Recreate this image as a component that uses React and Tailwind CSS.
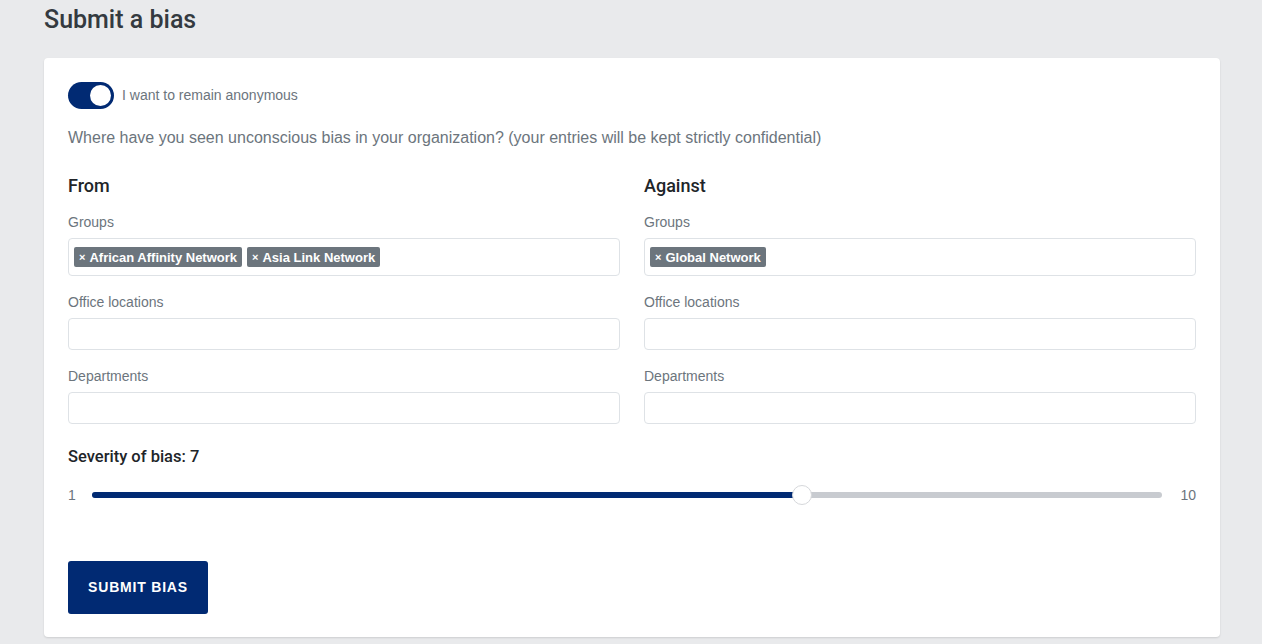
import React from "react";

const font = { fontFamily: '"Liberation Sans", Arial, sans-serif' };
const medium = { fontFamily: 'Roboto, "Liberation Sans", Arial, sans-serif' };

function Tag({ children }) {
  return (
    <span className="inline-flex items-center h-[20px] px-[5px] mr-[5px] rounded-[2px] bg-[#6c757d] text-white text-[13px] font-bold leading-none">
      <span className="text-[11px] font-bold mr-[4px]">×</span>
      {children}
    </span>
  );
}

function Column({ title, tags }) {
  return (
    <div className="flex-1 flex flex-col">
      <div className="text-[18px] leading-[22px] font-medium text-[#212529]" style={medium}>{title}</div>
      <div className="mt-[16px] text-[14px] leading-[18px] text-[#6c757d]">Groups</div>
      <div className="mt-[7px] h-[38px] border border-[#dee2e6] rounded-[4px] flex items-center pl-[5px]">
        {tags.map((t) => (
          <Tag key={t}>{t}</Tag>
        ))}
      </div>
      <div className="mt-[17px] text-[14px] leading-[18px] text-[#6c757d]">Office locations</div>
      <div className="mt-[7px] h-[32px] border border-[#dee2e6] rounded-[4px]" />
      <div className="mt-[17px] text-[14px] leading-[18px] text-[#6c757d]">Departments</div>
      <div className="mt-[7px] h-[32px] border border-[#dee2e6] rounded-[4px]" />
    </div>
  );
}

export default function App() {
  return (
    <div className="min-h-[644px] bg-[#e9eaec] px-[44px] pb-[6px]" style={font}>
      <div className="pt-[6px] text-[25px] leading-[28px] font-medium text-[#343a40]" style={medium}>Submit a bias</div>
      <div className="mt-[24px] w-[1176px] bg-white rounded-[4px] shadow-[0_1px_2px_rgba(0,0,0,0.12)] px-[24px] pt-[24px] pb-[23px]">
        <div className="flex items-center h-[27px]">
          <div className="w-[46px] h-[27px] rounded-full bg-[#012a73] flex items-center justify-end pr-[3px]">
            <div className="w-[21px] h-[21px] rounded-full bg-white" />
          </div>
          <span className="ml-[8px] text-[14px] text-[#6c757d]">I want to remain anonymous</span>
        </div>
        <div className="mt-[19px] text-[16px] leading-[20px] text-[#6c757d]">
          Where have you seen unconscious bias in your organization? (your entries will be kept strictly confidential)
        </div>
        <div className="mt-[27px] flex gap-[24px]">
          <Column title="From" tags={["African Affinity Network", "Asia Link Network"]} />
          <Column title="Against" tags={["Global Network"]} />
        </div>
        <div className="mt-[23px] text-[16.5px] leading-[20px] font-medium text-[#212529]" style={medium}>Severity of bias: 7</div>
        <div className="mt-[18px] h-[20px] flex items-center">
          <span className="w-[24px] text-[14px] text-[#6c757d]">1</span>
          <div className="relative flex-1 h-[6px] rounded-full bg-[#c8cbd0]">
            <div className="absolute left-0 top-0 h-[6px] w-[710px] rounded-full bg-[#012a73]" />
            <div className="absolute left-[700px] top-[-7px] w-[20px] h-[20px] rounded-full bg-white border border-[#d6d8db]" />
          </div>
          <span className="w-[34px] text-right text-[14px] text-[#6c757d]">10</span>
        </div>
        <button className="mt-[56px] w-[140px] h-[53px] rounded-[3px] bg-[#012a73] text-white text-[14px] font-bold tracking-[0.8px]">
          SUBMIT BIAS
        </button>
      </div>
    </div>
  );
}
